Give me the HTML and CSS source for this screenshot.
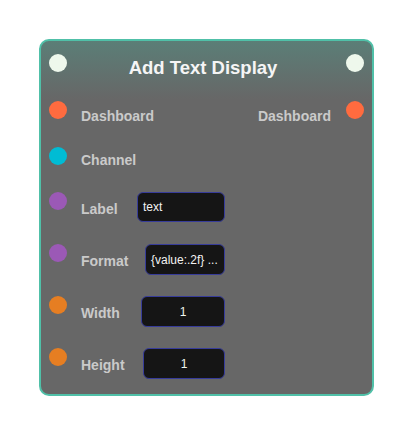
FILE: index.html
```html
<!DOCTYPE html>
<html>
<head>
<meta charset="utf-8">
<link rel="stylesheet" href="styles.css">
</head>
<body>
<div class="node">
  <div class="row row-header">
    <span class="socket socket-flow"></span>
    <div class="title">Add Text Display</div>
    <span class="socket socket-flow"></span>
  </div>
  <div class="row row-dash">
    <span class="socket socket-dash"></span>
    <span class="label">Dashboard</span>
    <span class="spacer"></span>
    <span class="label label-right">Dashboard</span>
    <span class="socket socket-dash socket-right"></span>
  </div>
  <div class="row row-channel">
    <span class="socket socket-channel"></span>
    <span class="label">Channel</span>
  </div>
  <div class="row row-field">
    <span class="socket socket-str"></span>
    <div class="field">
      <span class="label">Label</span>
      <div class="input input-label">text</div>
    </div>
  </div>
  <div class="row row-field">
    <span class="socket socket-str"></span>
    <div class="field">
      <span class="label">Format</span>
      <div class="input input-format">{value:.2f} ...</div>
    </div>
  </div>
  <div class="row row-field">
    <span class="socket socket-num"></span>
    <div class="field">
      <span class="label">Width</span>
      <div class="input input-num input-width">1</div>
    </div>
  </div>
  <div class="row row-field row-last">
    <span class="socket socket-num"></span>
    <div class="field">
      <span class="label">Height</span>
      <div class="input input-num input-height">1</div>
    </div>
  </div>
</div>
</body>
</html>
```
FILE: styles.css
```css
html, body {
  margin: 0;
  padding: 0;
  background: #ffffff;
}

.node {
  margin: 39px 0 0 39px;
  width: 335px;
  height: 357px;
  box-sizing: border-box;
  border: 2px solid #50c0a8;
  border-radius: 10px;
  padding: 13px 8px 0 8px;
  background: linear-gradient(to bottom, #5b7e77 0px, #676767 58px);
  font-family: "Liberation Sans", Arial, sans-serif;
}

.row {
  display: flex;
  align-items: flex-start;
}

.row-header { height: 47px; }
.row-dash { height: 46px; }
.row-channel { height: 45px; }
.row-field { height: 52px; }
.row-last { height: 31px; }

.socket {
  flex: none;
  width: 18px;
  height: 18px;
  border-radius: 50%;
}

.socket-flow { background: #eef8ec; }
.socket-dash { background: #ff6b3f; }
.socket-channel { background: #00bcd4; }
.socket-str { background: #9b59b6; }
.socket-num { background: #e67e22; }

.socket-right { margin-left: 15px; }

.title {
  flex: 1;
  text-align: center;
  padding-right: 7px;
  font-weight: bold;
  font-size: 18.5px;
  line-height: 28px;
  color: #f5f5f5;
}

.label {
  margin-left: 14px;
  font-weight: bold;
  font-size: 14px;
  line-height: 18px;
  color: #cacaca;
  white-space: nowrap;
}

.row-dash .label { padding-top: 6px; }
.row-channel .label { padding-top: 4px; }

.label-right { margin-left: 0; }

.spacer { flex: 1; }

.field {
  display: flex;
  align-items: flex-start;
  width: 144px;
  margin-left: 14px;
}

.field .label {
  margin-left: 0;
  padding-top: 7.5px;
}

.input {
  margin-left: auto;
  height: 31px;
  box-sizing: border-box;
  display: flex;
  align-items: center;
  padding: 0 5px;
  background: #151515;
  border: 1px solid #373c9a;
  border-radius: 6px;
  font-size: 12px;
  color: #f2f2f2;
  white-space: nowrap;
  overflow: hidden;
}

.input-label { width: 88px; height: 30px; }
.input-format { width: 80px; }
.input-width { width: 84px; }
.input-height { width: 82px; }

.input-num {
  justify-content: center;
  color: #eef7ee;
}
```
